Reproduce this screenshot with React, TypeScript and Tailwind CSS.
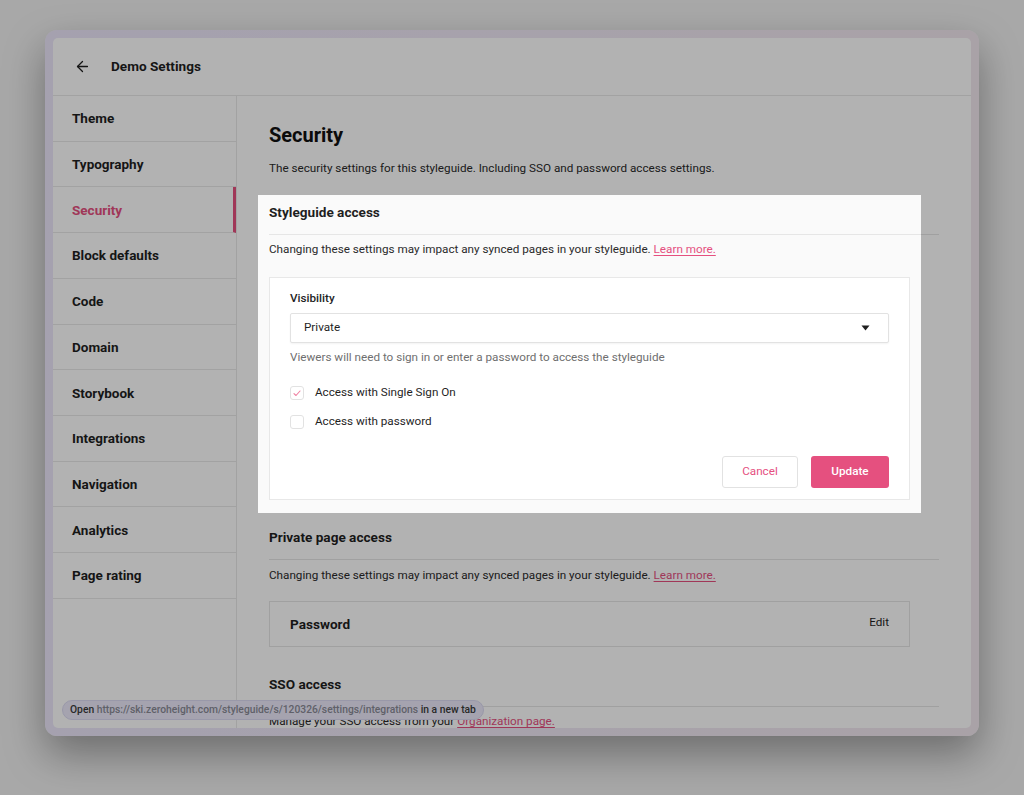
import { ArrowLeft } from 'lucide-react';

const navItems = [
  'Theme',
  'Typography',
  'Security',
  'Block defaults',
  'Code',
  'Domain',
  'Storybook',
  'Integrations',
  'Navigation',
  'Analytics',
  'Page rating',
];

const Checkbox = ({ checked }: { checked?: boolean }) => (
  <span className="flex h-[14px] w-[14px] items-center justify-center rounded-[3px] border border-[#e2e2e2] bg-white">
    {checked && (
      <svg width="8" height="7" viewBox="0 0 8 7" fill="none">
        <path d="M1 3.6 L3 5.5 L7 1" stroke="#ef7fa0" strokeWidth="1.1" strokeLinecap="round" strokeLinejoin="round" />
      </svg>
    )}
  </span>
);

const SectionHeading = ({ children, wide }: { children: React.ReactNode; wide?: boolean }) => (
  <h2
    className={`border-b border-[#e6e6e6] pb-[12px] text-[13.6px] font-bold leading-[20px] text-[#1f1f1f] ${
      wide ? 'w-[670px]' : ''
    }`}
  >
    {children}
  </h2>
);

const Sidebar = () => (
  <aside className="w-[184px] shrink-0 border-r border-[#e8e8e8]">
    {navItems.map((item) => {
      const active = item === 'Security';
      return (
        <div
          key={item}
          className={`flex h-[45.73px] items-center border-b border-[#e8e8e8] pl-[19px] text-[13.5px] font-bold ${
            active ? 'border-r-[3px] border-r-[#e5507f] text-[#e5507f]' : 'text-[#1f1f1f]'
          }`}
        >
          {item}
        </div>
      );
    })}
  </aside>
);

export default function App() {
  return (
    <div
      className="relative h-[795px] w-full overflow-hidden bg-[#f1f1f1] pl-[45px] pt-[30px]"
      style={{ fontFamily: 'Roboto, "Liberation Sans", sans-serif' }}
    >
      {/* window frame */}
      <div className="h-[706px] w-[934px] rounded-[12px] bg-gradient-to-r from-[#ece7fb] to-[#f3e9f0] p-[8px] shadow-[0_18px_40px_rgba(0,0,0,0.35)]">
        <div className="flex h-full flex-col overflow-hidden rounded-[5px] bg-white">
          {/* header */}
          <div className="flex h-[58px] shrink-0 items-center gap-[20px] border-b border-[#e8e8e8] pl-[21px]">
            <ArrowLeft className="h-[17px] w-[17px] text-[#1f1f1f]" strokeWidth={1.8} />
            <span className="text-[13.6px] font-bold text-[#1f1f1f]">Demo Settings</span>
          </div>

          <div className="flex min-h-0 flex-1">
            <Sidebar />

            {/* content */}
            <main className="min-w-0 flex-1 overflow-hidden pl-[32px] pt-[25px] text-[11.7px] text-[#2a2a2a]">
              <h1 className="text-[20px] font-bold leading-[28px] text-[#111]">Security</h1>
              <p className="mt-[9px] leading-[20px]">
                The security settings for this styleguide. Including SSO and password access settings.
              </p>

              {/* Styleguide access (highlighted) */}
              <section className="-ml-[11px] mt-[17px] w-[663px] bg-[#fafafa] pb-[13px] pl-[11px] pr-[11px] pt-[7px]">
                <SectionHeading wide>Styleguide access</SectionHeading>
                <p className="mt-[4px] leading-[20px]">
                  Changing these settings may impact any synced pages in your styleguide.{' '}
                  <a className="text-[#e5507f] underline underline-offset-2">Learn more.</a>
                </p>

                <div className="mt-[18px] border border-[#e8e8e8] bg-white px-[20px] pb-[11px] pt-[10px]">
                  <div className="font-medium leading-[20px] text-[#1f1f1f]">Visibility</div>
                  <div className="mt-[5px] flex h-[30px] items-center justify-between rounded-[2px] border border-[#e2e2e2] bg-white pl-[13px] pr-[18px] shadow-[0_1px_2px_rgba(0,0,0,0.05)]">
                    <span className="text-[#1f1f1f]">Private</span>
                    <svg width="9" height="6" viewBox="0 0 9 6">
                      <path d="M0.5 0.5 H8.5 L4.5 5.5 Z" fill="#1f1f1f" />
                    </svg>
                  </div>
                  <p className="mt-[4px] leading-[20px] text-[#6f6f6f]">
                    Viewers will need to sign in or enter a password to access the styleguide
                  </p>

                  <label className="mt-[16px] flex h-[20px] items-center gap-[11px] text-[#1f1f1f]">
                    <Checkbox checked />
                    Access with Single Sign On
                  </label>
                  <label className="mt-[9px] flex h-[20px] items-center gap-[11px] text-[#1f1f1f]">
                    <Checkbox />
                    Access with password
                  </label>

                  <div className="mt-[24px] flex justify-end gap-[13px]">
                    <button className="h-[32px] w-[76px] rounded-[3px] border border-[#e2e2e2] bg-white text-[#e5507f]">
                      Cancel
                    </button>
                    <button className="h-[32px] w-[78px] rounded-[3px] bg-[#e5507f] font-medium text-white">
                      Update
                    </button>
                  </div>
                </div>
              </section>

              {/* Private page access */}
              <section className="mt-[14px] w-[670px]">
                <SectionHeading>Private page access</SectionHeading>
                <p className="mt-[5px] leading-[20px]">
                  Changing these settings may impact any synced pages in your styleguide.{' '}
                  <a className="text-[#e5507f] underline underline-offset-2">Learn more.</a>
                </p>
                <div className="mt-[16px] flex h-[46px] w-[641px] items-center justify-between border border-[#e6e6e6] pl-[20px] pr-[20px]">
                  <span className="text-[13.6px] font-bold text-[#1f1f1f]">Password</span>
                  <span className="-mt-[2px] text-[#1f1f1f]">Edit</span>
                </div>
              </section>

              {/* SSO access */}
              <section className="mt-[27px] w-[670px]">
                <SectionHeading>SSO access</SectionHeading>
                <p className="mt-[4px] leading-[20px]">
                  Manage your SSO access from your{' '}
                  <a className="text-[#e5507f] underline underline-offset-2">Organization page.</a>
                </p>
              </section>
            </main>
          </div>
        </div>
      </div>

      {/* link preview tooltip */}
      <div className="absolute left-[62px] top-[700px] flex h-[20px] items-center rounded-full border border-[#dcdaf2] bg-[#eceafb] px-[7px] text-[10.3px] font-medium text-[#3a3a3a]">
        <span>Open&nbsp;</span>
        <span className="text-[#8a8a96]">https://ski.zeroheight.com/styleguide/s/120326/settings/integrations</span>
        <span>&nbsp;in a new tab</span>
      </div>

      {/* spotlight dimming */}
      <div className="pointer-events-none absolute left-[258px] top-[195px] z-10 h-[318px] w-[663px] shadow-[0_0_0_2000px_rgba(0,0,0,0.3)]" />
    </div>
  );
}
